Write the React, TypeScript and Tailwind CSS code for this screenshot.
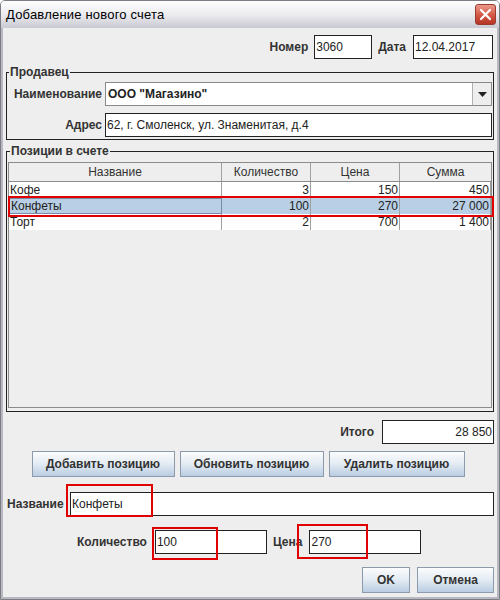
import React from 'react';

const font = { fontFamily: '"Liberation Sans", Arial, sans-serif' };

type Row = { name: string; qty: string; price: string; sum: string; selected?: boolean };

const rows: Row[] = [
    { name: 'Кофе', qty: '3', price: '150', sum: '450' },
    { name: 'Конфеты', qty: '100', price: '270', sum: '27 000', selected: true },
    { name: 'Торт', qty: '2', price: '700', sum: '1 400' },
];

const Field = ({ value, className = '', right = false }: { value: string; className?: string; right?: boolean }) => (
    <div
        className={`h-[24px] bg-white border border-[#222] flex items-center px-[1px] text-[12px] text-[#222] ${
            right ? 'justify-end' : ''
        } ${className}`}
    >
        {value}
    </div>
);

const Label = ({ children, className = '' }: { children: React.ReactNode; className?: string }) => (
    <div className={`text-[12px] font-bold text-[#333] ${className}`}>{children}</div>
);

const MetalButton = ({ children, className = '' }: { children: React.ReactNode; className?: string }) => (
    <button
        className={`h-[26px] border border-[#8b9bab] bg-gradient-to-b from-[#fbfcfd] via-[#e3ebf3] to-[#b9cde2] text-[12px] font-bold text-[#333] flex items-center justify-center ${className}`}
    >
        {children}
    </button>
);

const App = () => {
    return (
        <div
            className="relative w-[500px] h-[600px] flex flex-col bg-[#eeeeee] border border-[#7c7c84] rounded-t-[5px] overflow-hidden"
            style={font}
        >
            {/* title bar */}
            <div className="h-[27px] shrink-0 flex items-center justify-between pl-[5px] pr-[3px] bg-gradient-to-b from-[#fefefe] via-[#ececf0] to-[#c9cad2]">
                <span className="text-[13px] text-black tracking-[0.2px]">Добавление нового счета</span>
                <div className="w-[21px] h-[21px] rounded-[3px] border border-[#9a3a30] bg-gradient-to-b from-[#eb9a8c] via-[#d45a48] to-[#b63424] flex items-center justify-center">
                    <svg width="13" height="13" viewBox="0 0 13 13">
                        <path d="M2 2 L11 11 M11 2 L2 11" stroke="white" strokeWidth="2.2" strokeLinecap="round" />
                    </svg>
                </div>
            </div>

            {/* content */}
            <div className="flex-1 flex flex-col border-x-2 border-b-2 border-[#b8b8c0]">
                {/* number / date */}
                <div className="mt-[7px] flex items-center justify-end pr-[4px]">
                    <Label className="mr-[6px]">Номер</Label>
                    <Field value="3060" className="w-[58px] h-[23px]" />
                    <Label className="ml-[6px] mr-[7px]">Дата</Label>
                    <Field value="12.04.2017" className="w-[80px] h-[23px]" />
                </div>

                {/* seller */}
                <fieldset className="mt-[6px] mx-[3px] border border-[#222] pb-[2px] pr-[1px]">
                    <legend className="ml-[2px] px-[1px] text-[12px] font-bold text-[#333] leading-[14px]">Продавец</legend>
                    <div className="mt-[3px] flex items-center">
                        <Label className="w-[98px] text-right pr-[3px]">Наименование</Label>
                        <div className="flex-1 h-[24px] bg-white border border-[#8a8a8a] flex">
                            <div className="flex-1 flex items-center px-[2px] text-[12px] font-bold text-[#222]">
                                ООО "Магазино"
                            </div>
                            <div className="w-[19px] border-l border-[#b0b0b0] bg-[#eeeeee] flex items-center justify-center">
                                <svg width="9" height="5" viewBox="0 0 9 5">
                                    <path d="M0 0 L9 0 L4.5 5 Z" fill="#222" />
                                </svg>
                            </div>
                        </div>
                    </div>
                    <div className="mt-[7px] flex items-center">
                        <Label className="w-[98px] text-right pr-[3px]">Адрес</Label>
                        <Field value="62, г. Смоленск, ул. Знаменитая, д.4" className="flex-1" />
                    </div>
                </fieldset>

                {/* positions */}
                <fieldset className="mt-[4px] mx-[3px] border border-[#222] pb-[3px] pl-[1px] pr-[1px]">
                    <legend className="ml-[2px] px-[1px] text-[12px] font-bold text-[#333] leading-[14px]">
                        Позиции в счете
                    </legend>
                    <div className="mt-[4px] h-[246px] border border-[#8c8c8c] bg-[#eeeeee] flex flex-col text-[12px] text-[#222]">
                        <div className="h-[19px] flex border-b border-[#8c8c8c] text-[#333]">
                            <div className="w-[213px] border-r border-[#a0a0a0] flex items-center justify-center">Название</div>
                            <div className="w-[89px] border-r border-[#a0a0a0] flex items-center justify-center">Количество</div>
                            <div className="w-[89px] border-r border-[#a0a0a0] flex items-center justify-center">Цена</div>
                            <div className="flex-1 flex items-center justify-center">Сумма</div>
                        </div>
                        {rows.map((r) => (
                            <div key={r.name} className={`h-[16px] flex ${r.selected ? 'bg-[#b8cfe5]' : 'bg-white'}`}>
                                <div
                                    className={`w-[213px] flex items-center px-[1px] ${
                                        r.selected ? 'border border-[#7a8aa6]' : 'border-r border-[#a0a0a0]'
                                    }`}
                                >
                                    {r.name}
                                </div>
                                <div className="w-[89px] border-r border-[#a0a0a0] flex items-center justify-end px-[1px]">{r.qty}</div>
                                <div className="w-[89px] border-r border-[#a0a0a0] flex items-center justify-end px-[1px]">{r.price}</div>
                                <div className="flex-1 border-r border-[#a0a0a0] flex items-center justify-end px-[1px]">{r.sum}</div>
                            </div>
                        ))}
                    </div>
                </fieldset>

                {/* total */}
                <div className="mt-[8px] flex items-center justify-end pr-[3px]">
                    <Label className="mr-[8px]">Итого</Label>
                    <Field value="28 850" right className="w-[112px]" />
                </div>

                {/* actions */}
                <div className="mt-[7px] flex justify-center gap-[5px] pr-[4px]">
                    <MetalButton className="w-[143px]">Добавить позицию</MetalButton>
                    <MetalButton className="w-[144px]">Обновить позицию</MetalButton>
                    <MetalButton className="w-[136px]">Удалить позицию</MetalButton>
                </div>

                {/* name */}
                <div className="mt-[15px] flex items-center pl-[4px] pr-[3px]">
                    <Label className="w-[63px]">Название</Label>
                    <Field value="Конфеты" className="flex-1" />
                </div>

                {/* qty / price */}
                <div className="mt-[14px] flex items-center pl-[74px]">
                    <Label className="mr-[8px]">Количество</Label>
                    <Field value="100" className="w-[112px]" />
                    <Label className="ml-[6px] mr-[7px]">Цена</Label>
                    <Field value="270" className="w-[112px]" />
                </div>

                {/* ok / cancel */}
                <div className="mt-[13px] flex justify-end gap-[7px] pr-[3px]">
                    <MetalButton className="w-[48px]">OK</MetalButton>
                    <MetalButton className="w-[77px]">Отмена</MetalButton>
                </div>
            </div>

            {/* red annotation boxes */}
            <div className="absolute left-[7px] top-[195px] w-[486px] h-[21px] border-2 border-[#e00000] pointer-events-none" />
            <div className="absolute left-[65px] top-[483px] w-[87px] h-[33px] border-2 border-[#e00000] pointer-events-none" />
            <div className="absolute left-[151px] top-[526px] w-[66px] h-[33px] border-2 border-[#e00000] pointer-events-none" />
            <div className="absolute left-[296px] top-[523px] w-[71px] h-[35px] border-2 border-[#e00000] pointer-events-none" />
        </div>
    );
};

export default App;
